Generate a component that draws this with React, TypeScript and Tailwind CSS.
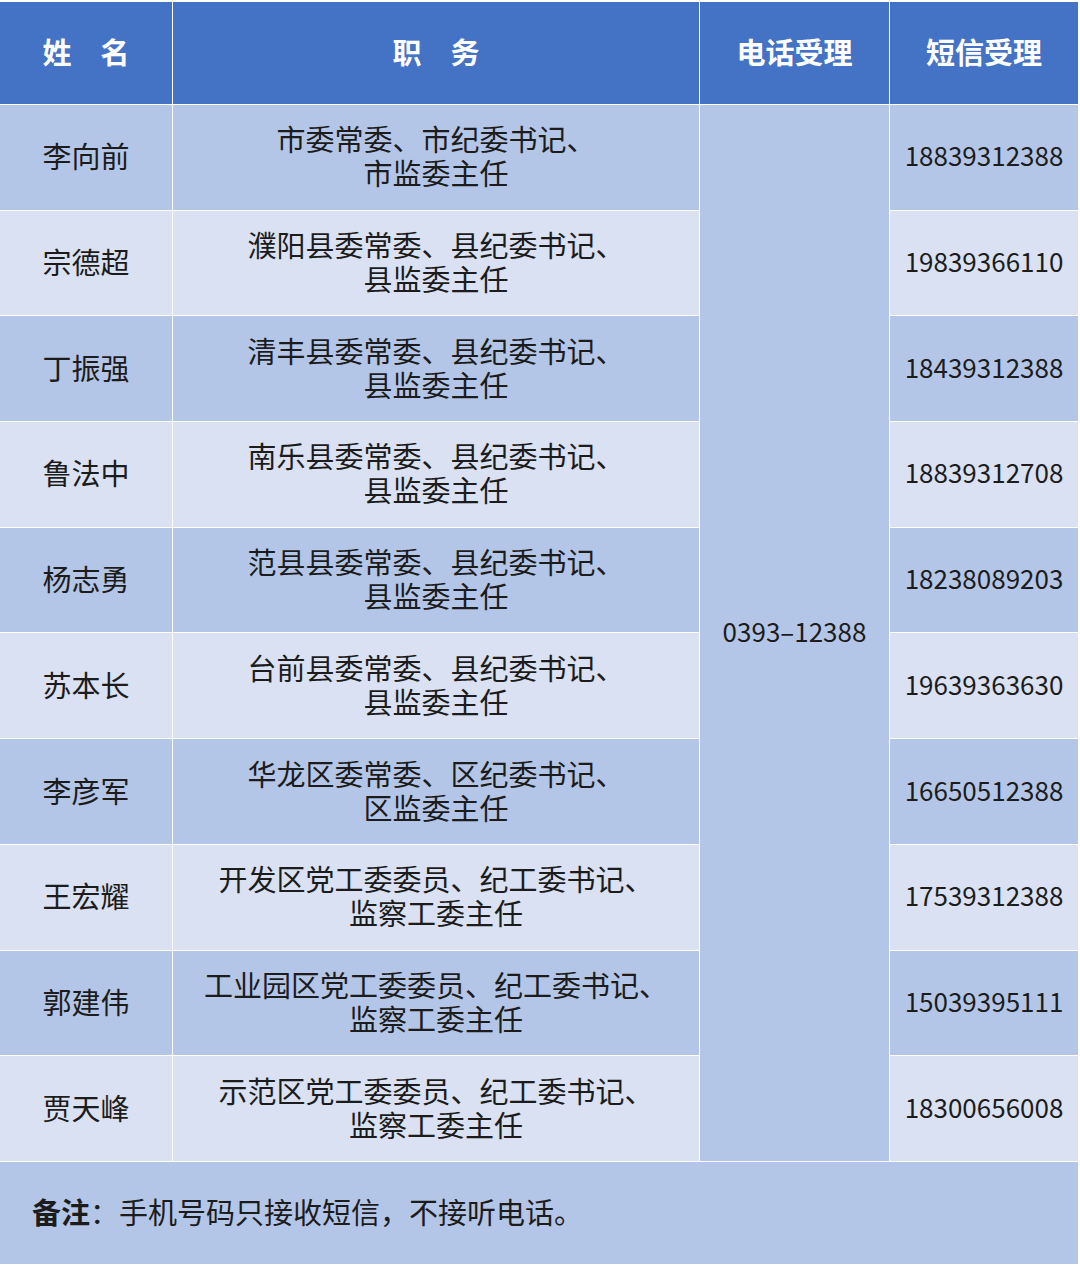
const rows = [
  { name: "李向前", pos: ["市委常委、市纪委书记、", "市监委主任"], sms: "18839312388" },
  { name: "宗德超", pos: ["濮阳县委常委、县纪委书记、", "县监委主任"], sms: "19839366110" },
  { name: "丁振强", pos: ["清丰县委常委、县纪委书记、", "县监委主任"], sms: "18439312388" },
  { name: "鲁法中", pos: ["南乐县委常委、县纪委书记、", "县监委主任"], sms: "18839312708" },
  { name: "杨志勇", pos: ["范县县委常委、县纪委书记、", "县监委主任"], sms: "18238089203" },
  { name: "苏本长", pos: ["台前县委常委、县纪委书记、", "县监委主任"], sms: "19639363630" },
  { name: "李彦军", pos: ["华龙区委常委、区纪委书记、", "区监委主任"], sms: "16650512388" },
  { name: "王宏耀", pos: ["开发区党工委委员、纪工委书记、", "监察工委主任"], sms: "17539312388" },
  { name: "郭建伟", pos: ["工业园区党工委委员、纪工委书记、", "监察工委主任"], sms: "15039395111" },
  { name: "贾天峰", pos: ["示范区党工委委员、纪工委书记、", "监察工委主任"], sms: "18300656008" },
];

export default function App() {
  return (
    <div className="w-[1080px] h-[1266px] bg-white pt-[2px] pr-[2px] pb-[2px] font-['Noto_Sans_CJK_SC',sans-serif] text-[#1c1c1c]">
      <div className="grid h-[1262px] grid-cols-[172px_526px_189px_188px] grid-rows-[102px_repeat(10,minmax(0,1fr))_102px] gap-px text-[29px] leading-[34px]">
        {/* Header */}
        <div className="flex items-center justify-center bg-[#4472c4] pb-1 font-bold text-white">姓　名</div>
        <div className="flex items-center justify-center bg-[#4472c4] pb-1 font-bold text-white">职　务</div>
        <div className="flex items-center justify-center bg-[#4472c4] pb-1 font-bold text-white">电话受理</div>
        <div className="flex items-center justify-center bg-[#4472c4] pb-1 font-bold text-white">短信受理</div>

        {/* Merged phone cell */}
        <div className="col-start-3 row-start-2 row-span-10 flex items-center justify-center bg-[#b4c6e7] pb-1 text-[26px]">
          0393‒12388
        </div>

        {rows.map((r, i) => {
          const bg = i % 2 === 0 ? "bg-[#b4c6e7]" : "bg-[#d9e1f2]";
          return [
            <div key={r.name + "n"} className={`flex items-center justify-center pb-1 ${bg}`}>
              {r.name}
            </div>,
            <div key={r.name + "p"} className={`flex flex-col items-center justify-center pb-1 text-center ${bg}`}>
              <span>{r.pos[0]}</span>
              <span>{r.pos[1]}</span>
            </div>,
            <div key={r.name + "s"} className={`flex items-center justify-center pb-1 text-[26px] ${bg}`}>
              {r.sms}
            </div>,
          ];
        })}

        {/* Footer */}
        <div className="col-span-4 flex items-center bg-[#b4c6e7] pb-1 pl-8">
          <span className="font-bold">备注</span>
          <span>：手机号码只接收短信，不接听电话。</span>
        </div>
      </div>
    </div>
  );
}
